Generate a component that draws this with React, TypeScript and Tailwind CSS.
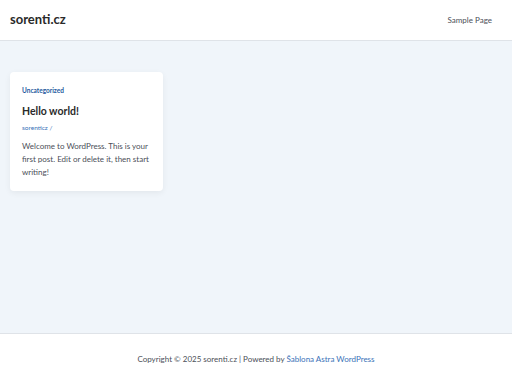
import React from 'react';

export default function App() {
  return (
    <div
      className="flex h-[384px] w-[512px] flex-col bg-[#f0f5fa] text-[#4b4f58]"
      style={{ fontFamily: 'Lato, "Noto Sans", sans-serif' }}
    >
      <header className="flex h-[41px] shrink-0 items-center justify-between border-b border-[#dfe3e8] bg-white px-[10px]">
        <span className="text-[13px] font-bold text-[#2a2a2a]">sorenti.cz</span>
        <span className="pr-[10px] text-[8px] text-[#4b4f58]">Sample Page</span>
      </header>

      <main className="flex-1 px-[10px] pt-[31px]">
        <article className="w-[153px] rounded-[4px] bg-white px-[12px] pt-[14px] pb-[12px] shadow-[0_2px_6px_rgba(0,0,0,0.06)]">
          <div className="text-[6.5px] font-bold leading-[10px] text-[#1f5a9e]">Uncategorized</div>
          <h2 className="mt-[8px] text-[10.5px] font-bold leading-[14px] text-[#2a2a2a]">Hello world!</h2>
          <div className="mt-[5px] text-[6.5px] leading-[10px] text-[#3a72b8]">sorenticz /</div>
          <p className="mt-[7px] text-[8px] leading-[13px] text-[#4b4f58]">
            Welcome to WordPress. This is your first post. Edit or delete it, then start writing!
          </p>
        </article>
      </main>

      <footer className="flex h-[51px] shrink-0 items-center justify-center border-t border-[#dfe3e8] bg-white text-[8px] text-[#4b4f58]">
        <span>
          Copyright © 2025 sorenti.cz | Powered by <span className="text-[#3a72b8]">Šablona Astra WordPress</span>
        </span>
      </footer>
    </div>
  );
}
